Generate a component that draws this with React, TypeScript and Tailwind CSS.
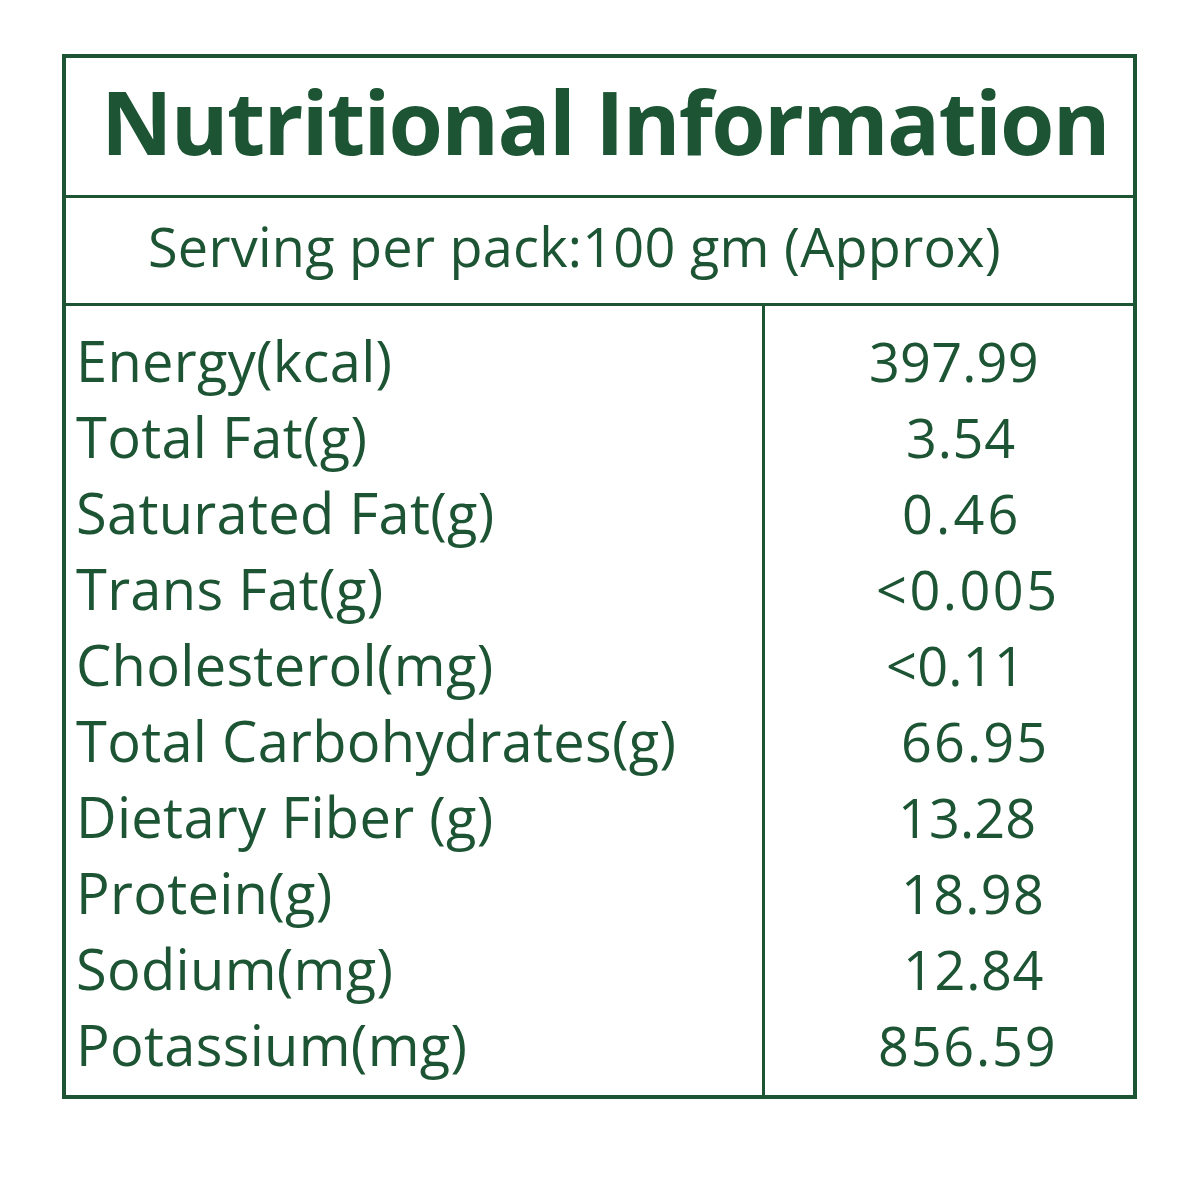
import React from "react";

const rows: { label: string; value: string; cls: string }[] = [
  { label: "Energy(kcal)", value: "397.99", cls: "pl-[104px] tracking-[0.2px]" },
  { label: "Total Fat(g)", value: "3.54", cls: "pl-[141px] tracking-[0.75px]" },
  { label: "Saturated Fat(g)", value: "0.46", cls: "pl-[137px] tracking-[3.2px]" },
  { label: "Trans Fat(g)", value: "<0.005", cls: "pl-[111px] tracking-[2.5px]" },
  { label: "Cholesterol(mg)", value: "<0.11", cls: "pl-[121px] tracking-[0.3px]" },
  { label: "Total Carbohydrates(g)", value: "66.95", cls: "pl-[136px] tracking-[2.1px]" },
  { label: "Dietary Fiber (g)", value: "13.28", cls: "pl-[133px] tracking-[0.1px]" },
  { label: "Protein(g)", value: "18.98", cls: "pl-[136px] tracking-[1.3px]" },
  { label: "Sodium(mg)", value: "12.84", cls: "pl-[138px] tracking-[0.7px]" },
  { label: "Potassium(mg)", value: "856.59", cls: "pl-[113px] tracking-[1.8px]" },
];

export default function App() {
  return (
    <div
      className="w-[1200px] h-[1200px] bg-white pt-[54px] pl-[62px] text-[#1c5434]"
      style={{ fontFamily: '"Open Sans", "Noto Sans", sans-serif' }}
    >
      <div className="w-[1075px] h-[1045px] border-4 border-[#1c5434] flex flex-col">
        <div className="h-[140px] border-b-[3px] border-[#1c5434] flex items-center pl-[35px] pb-[11px]">
          <h1 className="text-[88px] font-bold leading-none tracking-[-1.7px] whitespace-nowrap">Nutritional Information</h1>
        </div>
        <div className="h-[108px] border-b-[3px] border-[#1c5434] flex items-center pl-[82px] pb-[9px]">
          <p className="text-[54px] leading-none tracking-[0.25px] whitespace-nowrap">Serving per pack:100 gm (Approx)</p>
        </div>
        <div className="flex flex-1">
          <div className="w-[699px] border-r-[3px] border-[#1c5434] pt-[16px] pl-[10px]">
            {rows.map((r) => (
              <div key={r.label} className="h-[76px] text-[56px] leading-[76px] tracking-[0.3px] whitespace-nowrap">
                {r.label}
              </div>
            ))}
          </div>
          <div className="flex-1 pt-[17px]">
            {rows.map((r) => (
              <div key={r.label} className={`h-[76px] text-[54px] leading-[76px] whitespace-nowrap ${r.cls}`}>
                {r.value}
              </div>
            ))}
          </div>
        </div>
      </div>
    </div>
  );
}
